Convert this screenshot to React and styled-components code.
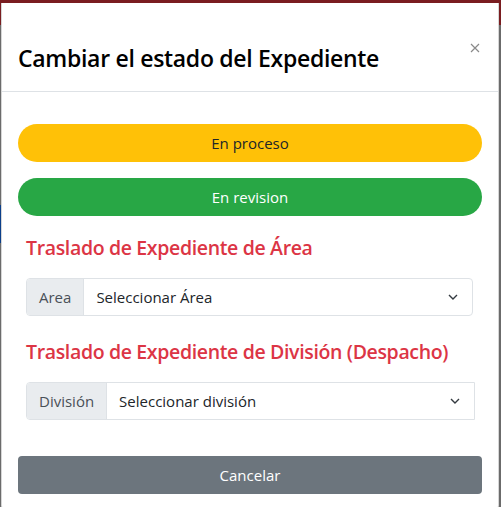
import React from "react";
import styled, { createGlobalStyle } from "styled-components";

const Global = createGlobalStyle`
  html, body { margin: 0; padding: 0; }
  body { font-family: "Open Sans", "Noto Sans", sans-serif; }
  * { box-sizing: border-box; }
`;

const Page = styled.div`
  width: 501px;
  height: 507px;
  overflow: hidden;
  padding: 3px 2px 0 1px;
  background:
    linear-gradient(#0b3f8a, #0b3f8a) 0 205px / 1px 38px no-repeat,
    linear-gradient(to bottom, #7a1d20 0, #7a1d20 25px, #6b6b6b 25px, #6b6b6b 100%);
`;

const Modal = styled.div`
  width: 498px;
  background: #fff;
  border-left: 1px solid #d6d6d6;
  border-right: 1px solid #d6d6d6;
  border-radius: 0 0 5px 5px;
  display: flex;
  flex-direction: column;
`;

const Header = styled.div`
  display: flex;
  justify-content: space-between;
  align-items: flex-start;
  height: 89px;
  padding: 40px 18px 0 16px;
  border-bottom: 1px solid #dee2e6;
`;

const Title = styled.h4`
  margin: 0;
  font-size: 23px;
  line-height: 30px;
  font-weight: 600;
  color: #000;
  letter-spacing: -0.3px;
`;

const Close = styled.button`
  border: 0;
  background: none;
  padding: 0;
  width: 10px;
  height: 10px;
  display: flex;
  cursor: pointer;
`;

const Body = styled.div`
  padding: 32px 16px 16px;
  display: flex;
  flex-direction: column;
`;

const Pill = styled.button`
  height: 38px;
  border: 0;
  border-radius: 19px;
  background: ${(p) => p.$bg};
  color: ${(p) => p.$fg};
  font-family: inherit;
  font-size: 15px;
  font-weight: 400;
  margin-bottom: ${(p) => p.$mb || 0}px;
`;

const Section = styled.div`
  padding: 0 0 0 8px;
  display: flex;
  flex-direction: column;
`;

const Heading = styled.h5`
  margin: ${(p) => p.$mt}px 0 18px;
  font-size: 19.5px;
  line-height: 24px;
  font-weight: 600;
  color: #dc3545;
  letter-spacing: -0.35px;
`;

const Group = styled.div`
  display: flex;
  height: 38px;
  margin-right: ${(p) => p.$mr}px;
  border: 1px solid #dee2e6;
  border-radius: ${(p) => (p.$square ? "4px 0 0 4px" : "4px")};
  overflow: hidden;
`;

const Prefix = styled.span`
  display: flex;
  align-items: center;
  padding: 0 12px;
  background: #e9ecef;
  color: #495057;
  font-size: 15px;
  border-right: 1px solid #dee2e6;
`;

const Select = styled.div`
  flex: 1;
  display: flex;
  align-items: center;
  justify-content: space-between;
  padding: 0 14px 0 12px;
  color: #212529;
  font-size: 15px;
`;

const Cancel = styled.button`
  margin-top: 36px;
  height: 38px;
  border: 0;
  border-radius: 4px;
  background: #6c757d;
  color: #fff;
  font-family: inherit;
  font-size: 15px;
`;

const Chevron = () => (
  <svg width="10" height="6" viewBox="0 0 10 6">
    <path d="M1 1l4 4 4-4" fill="none" stroke="#343a40" strokeWidth="1.4" />
  </svg>
);

export default function App() {
  return (
    <>
      <Global />
      <Page>
        <Modal>
          <Header>
            <Title>Cambiar el estado del Expediente</Title>
            <Close aria-label="Cerrar">
              <svg width="10" height="10" viewBox="0 0 10 10">
                <path d="M1 1l8 8M9 1l-8 8" stroke="#8a8a8a" strokeWidth="1.2" />
              </svg>
            </Close>
          </Header>
          <Body>
            <Pill $bg="#ffc107" $fg="#212529" $mb={16}>En proceso</Pill>
            <Pill $bg="#28a745" $fg="#fff">En revision</Pill>
            <Section>
              <Heading $mt={20}>Traslado de Expediente de Área</Heading>
              <Group $mr={9}>
                <Prefix>Area</Prefix>
                <Select>
                  Seleccionar Área
                  <Chevron />
                </Select>
              </Group>
              <Heading $mt={24}>Traslado de Expediente de División (Despacho)</Heading>
              <Group $mr={7} $square>
                <Prefix>División</Prefix>
                <Select>
                  Seleccionar división
                  <Chevron />
                </Select>
              </Group>
            </Section>
            <Cancel>Cancelar</Cancel>
          </Body>
        </Modal>
      </Page>
    </>
  );
}
